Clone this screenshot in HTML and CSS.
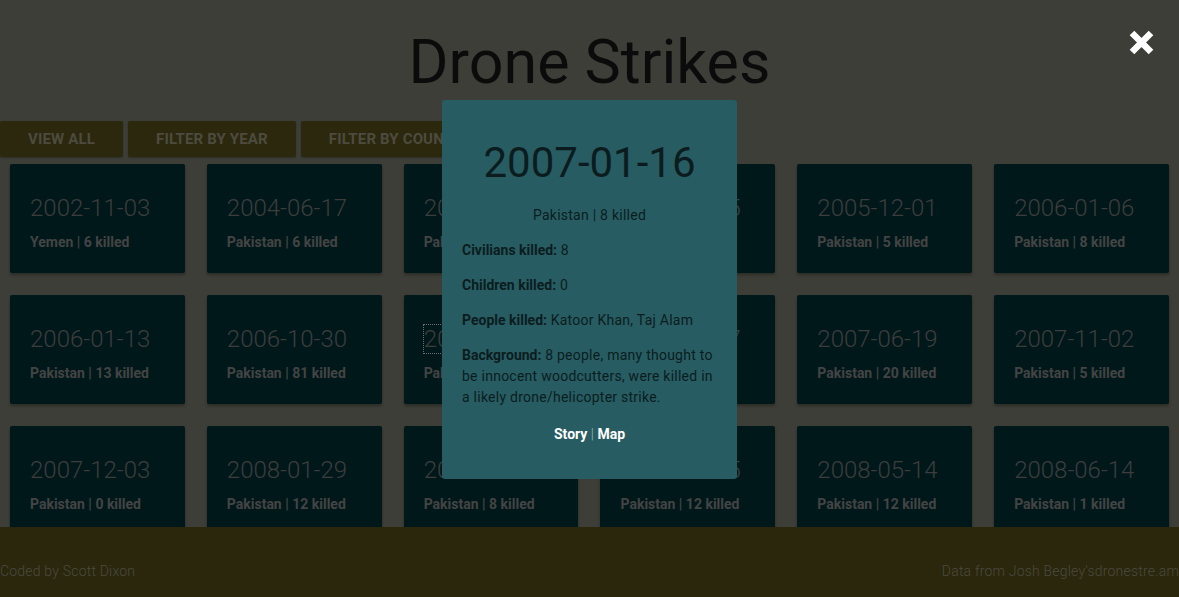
FILE: index.html
```html
<!DOCTYPE html>
<html lang="en">
<head>
<meta charset="utf-8">
<title>Drone Strikes</title>
<link rel="stylesheet" href="styles.css">
</head>
<body>
  <header class="header">
    <h1 class="title">Drone Strikes</h1>
  </header>
  <nav class="filters">
    <button class="btn">View all</button>
    <button class="btn">Filter by year</button>
    <button class="btn">Filter by country</button>
  </nav>
  <main class="grid-wrap">
    <div class="grid">
      <div class="card"><h3 class="card-date">2002-11-03</h3><p class="card-sub">Yemen | 6 killed</p></div>
      <div class="card"><h3 class="card-date">2004-06-17</h3><p class="card-sub">Pakistan | 6 killed</p></div>
      <div class="card"><h3 class="card-date">2005-05-08</h3><p class="card-sub">Pakistan | 2 killed</p></div>
      <div class="card"><h3 class="card-date">2005-11-05</h3><p class="card-sub">Pakistan | 8 killed</p></div>
      <div class="card"><h3 class="card-date">2005-12-01</h3><p class="card-sub">Pakistan | 5 killed</p></div>
      <div class="card"><h3 class="card-date">2006-01-06</h3><p class="card-sub">Pakistan | 8 killed</p></div>

      <div class="card"><h3 class="card-date">2006-01-13</h3><p class="card-sub">Pakistan | 13 killed</p></div>
      <div class="card"><h3 class="card-date">2006-10-30</h3><p class="card-sub">Pakistan | 81 killed</p></div>
      <div class="card"><h3 class="card-date is-focused">2007-01-16</h3><p class="card-sub">Pakistan | 8 killed</p></div>
      <div class="card"><h3 class="card-date">2007-04-27</h3><p class="card-sub">Pakistan | 4 killed</p></div>
      <div class="card"><h3 class="card-date">2007-06-19</h3><p class="card-sub">Pakistan | 20 killed</p></div>
      <div class="card"><h3 class="card-date">2007-11-02</h3><p class="card-sub">Pakistan | 5 killed</p></div>

      <div class="card"><h3 class="card-date">2007-12-03</h3><p class="card-sub">Pakistan | 0 killed</p></div>
      <div class="card"><h3 class="card-date">2008-01-29</h3><p class="card-sub">Pakistan | 12 killed</p></div>
      <div class="card"><h3 class="card-date">2008-02-28</h3><p class="card-sub">Pakistan | 8 killed</p></div>
      <div class="card"><h3 class="card-date">2008-03-15</h3><p class="card-sub">Pakistan | 12 killed</p></div>
      <div class="card"><h3 class="card-date">2008-05-14</h3><p class="card-sub">Pakistan | 12 killed</p></div>
      <div class="card"><h3 class="card-date">2008-06-14</h3><p class="card-sub">Pakistan | 1 killed</p></div>
    </div>
  </main>
  <footer class="footer">
    <span class="footer-left">Coded by Scott Dixon</span>
    <span class="footer-right">Data from Josh Begley'sdronestre.am</span>
  </footer>

  <div class="modal">
    <h2 class="modal-date">2007-01-16</h2>
    <p class="modal-sub">Pakistan | 8 killed</p>
    <p><b>Civilians killed:</b> 8</p>
    <p><b>Children killed:</b> 0</p>
    <p><b>People killed:</b> Katoor Khan, Taj Alam</p>
    <p><b>Background:</b> 8 people, many thought to be innocent woodcutters, were killed in a likely drone/helicopter strike.</p>
    <p class="modal-links"><a class="link">Story</a> <span class="sep">|</span> <a class="link">Map</a></p>
  </div>

  <button class="close" aria-label="Close">
    <svg width="25" height="25" viewBox="0 0 25 25"><path d="M3 3 L22 22 M22 3 L3 22" stroke="#ffffff" stroke-width="6.5" stroke-linecap="butt" fill="none"/></svg>
  </button>
</body>
</html>
```

FILE: styles.css
```css
* { box-sizing: border-box; }

html, body {
  margin: 0;
  padding: 0;
}

body {
  height: 100vh;
  display: flex;
  flex-direction: column;
  overflow: hidden;
  background: #3e3e38;
  font-family: Roboto, "Liberation Sans", sans-serif;
  color: #3f3f3f;
}

.header {
  padding-top: 26px;
}

.title {
  margin: 0;
  text-align: center;
  font-size: 61px;
  line-height: 72px;
  font-weight: 400;
  color: #0b0b0b;
}

.filters {
  display: flex;
  gap: 5px;
  margin-top: 23px;
  height: 36px;
}

.btn {
  height: 36px;
  padding: 0 28px;
  border: none;
  border-radius: 2px;
  background: #2b280d;
  color: #4d4b3f;
  font-family: Roboto, "Liberation Sans", sans-serif;
  font-size: 15px;
  font-weight: 700;
  line-height: 36px;
  letter-spacing: 0.15px;
  text-transform: uppercase;
  box-shadow: 0 1px 2px rgba(0,0,0,0.25);
}

.grid-wrap {
  flex: 1;
  overflow: hidden;
  margin-top: 7px;
}

.grid {
  display: grid;
  grid-template-columns: repeat(6, 1fr);
  column-gap: 22px;
  row-gap: 22px;
  padding: 0 10px;
}

.card {
  height: 109px;
  padding: 30px 20px 0;
  background: #01181a;
  border-radius: 2px;
  box-shadow: 0 2px 3px rgba(0,0,0,0.3);
}

.card-date {
  margin: 0;
  font-size: 24px;
  line-height: 28px;
  font-weight: 300;
  color: #3d3d3d;
}

.is-focused {
  outline: 1px dotted #6e6e6e;
}

.card-sub {
  margin: 12px 0 0;
  font-size: 14px;
  line-height: 16px;
  font-weight: 700;
  color: #444444;
}

.footer {
  height: 70px;
  flex: none;
  display: flex;
  justify-content: space-between;
  padding-top: 36px;
  background: #2a270c;
  color: #4b4a40;
  font-size: 14px;
  line-height: 16px;
  font-weight: 300;
  letter-spacing: 0.2px;
  white-space: nowrap;
}

.modal {
  position: absolute;
  left: 442px;
  top: 100px;
  width: 295px;
  padding: 20px;
  background: #265c62;
  border-radius: 3px;
  color: #0c1c1e;
  font-size: 14px;
  line-height: 21px;
  letter-spacing: 0.25px;
}

.modal p {
  margin: 14px 0;
}

.modal b {
  font-weight: 700;
  letter-spacing: 0;
}

.modal-date {
  margin: 18px 0 17px;
  text-align: center;
  font-size: 42px;
  line-height: 50px;
  font-weight: 400;
  letter-spacing: 0;
}

.modal .modal-sub {
  text-align: center;
}

.modal .modal-links {
  margin-top: 16px;
  text-align: center;
  letter-spacing: 0;
}

.link {
  color: #ffffff;
  font-weight: 700;
}

.sep {
  color: #9bb3b5;
  font-weight: 300;
}

.close {
  position: absolute;
  left: 1129px;
  top: 30px;
  width: 25px;
  height: 25px;
  padding: 0;
  border: none;
  background: none;
}

.close svg {
  display: block;
  overflow: visible;
}
```
